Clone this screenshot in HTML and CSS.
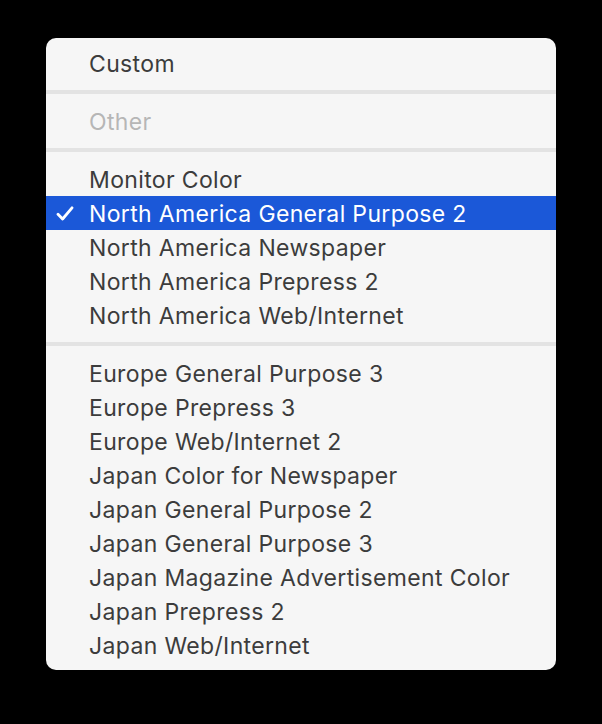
FILE: index.html
```html
<!DOCTYPE html>
<html lang="en">
<head>
	<meta charset="UTF-8">
	<title>Color Settings</title>
	<link rel="stylesheet" href="styles.css">
</head>
<body>

<div class="menu">
	<div class="item">Custom</div>
	<div class="sep"></div>
	<div class="item off">Other</div>
	<div class="sep"></div>
	<div class="item">Monitor Color</div>
	<div class="item cur">
		<svg class="chk" width="18" height="15" viewBox="0 0 18 15"><path d="M2 8.2 L6.6 13 L16 1.8" fill="none" stroke="#fff" stroke-width="2.8" stroke-linecap="round" stroke-linejoin="round"/></svg>
		North America General Purpose 2
	</div>
	<div class="item">North America Newspaper</div>
	<div class="item">North America Prepress 2</div>
	<div class="item">North America Web/Internet</div>
	<div class="sep"></div>
	<div class="item">Europe General Purpose 3</div>
	<div class="item">Europe Prepress 3</div>
	<div class="item">Europe Web/Internet 2</div>
	<div class="item">Japan Color for Newspaper</div>
	<div class="item">Japan General Purpose 2</div>
	<div class="item">Japan General Purpose 3</div>
	<div class="item">Japan Magazine Advertisement Color</div>
	<div class="item">Japan Prepress 2</div>
	<div class="item">Japan Web/Internet</div>
</div>

</body>
</html>
```

FILE: styles.css
```css
*{margin:0; padding:0; box-sizing:border-box;}
html,body{ height:100%; }
body{ background:#000; padding:38px 46px 0 46px; font-family:Inter, "Liberation Sans", sans-serif; }

.menu{ width:510px; height:632px; padding:8px 0; background:#f6f6f6; border-radius:10px; }

.item{ position:relative; height:34px; line-height:32px; padding:2px 0 0 43px; font-size:23px; letter-spacing:0.35px; color:#3c3c3c; white-space:nowrap; }
.off{ color:#b6b6b6; }
.cur{ background:#1b58d8; color:#fff; }
.chk{ position:absolute; left:10px; top:10px; }

/*分隔线*/
.sep{ height:4px; margin:10px 0; background:#e3e3e3; }
```
